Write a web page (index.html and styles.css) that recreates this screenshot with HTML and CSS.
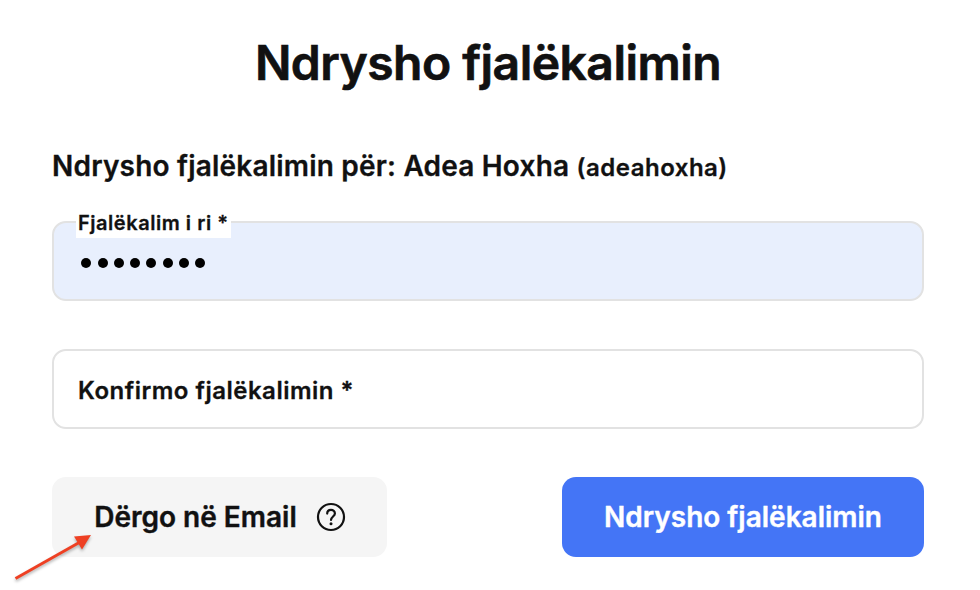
FILE: index.html
```html
<!DOCTYPE html>
<html lang="sq">
  <head>
    <meta charset="utf-8" />
    <meta name="viewport" content="width=device-width, initial-scale=1.0" />
    <title>Ndrysho fjalëkalimin</title>
    <link rel="stylesheet" href="styles.css">
  </head>
  <body>
    <form class="password-form">
      <h1 class="title">Ndrysho fjalëkalimin</h1>
      <h2 class="subtitle">Ndrysho fjalëkalimin për: Adea Hoxha <small>(adeahoxha)</small></h2>

      <div class="field field-filled">
        <span class="field-label">Fjalëkalim i ri *</span>
        <div class="dots">
          <i></i><i></i><i></i><i></i><i></i><i></i><i></i><i></i>
        </div>
      </div>

      <div class="field">
        <span class="field-placeholder">Konfirmo fjalëkalimin *</span>
      </div>

      <div class="actions">
        <button class="btn btn-light" type="button">
          <span>Dërgo në Email</span>
          <svg class="help-icon" width="30" height="30" viewBox="0 0 30 30" fill="none" stroke="#111" stroke-width="2.2" stroke-linecap="round" stroke-linejoin="round">
            <circle cx="15" cy="15" r="13" />
            <path d="M11.2 11.6C11.2 9.2 12.9 7.8 15 7.8s3.9 1.4 3.9 3.6c0 2.9-3.9 3.3-3.9 6.6" />
            <circle cx="15" cy="21.8" r="1.5" fill="#111" stroke="none" />
          </svg>
        </button>
        <button class="btn btn-primary" type="button">Ndrysho fjalëkalimin</button>
      </div>
    </form>

    <svg class="arrow" width="90" height="60" viewBox="0 0 90 60">
      <path d="M2.5 48.5L68 11.5" stroke="#ee4023" stroke-width="3" />
      <path d="M78 5L61 6.5L69 19.5Z" fill="#ee4023" />
    </svg>
  </body>
</html>
```
FILE: styles.css
```css
*{
  box-sizing: border-box;
}
body{
  margin: 0;
  background: #fff;
  color: #111;
  font-family: Inter, "Liberation Sans", sans-serif;
  -webkit-text-stroke: 0.3px;
}
.password-form{
  padding: 33px 56px 0 52px;
}
.title{
  margin: 0;
  font-size: 48px;
  line-height: 60px;
  font-weight: 600;
  letter-spacing: -0.52px;
  text-align: center;
  -webkit-text-stroke: 0.7px;
}
.subtitle{
  margin: 54px 0 34px;
  font-size: 28px;
  line-height: 38px;
  font-weight: 600;
  letter-spacing: 0.2px;
  white-space: nowrap;
}
.subtitle small{
  font-size: 24px;
  letter-spacing: 0.5px;
}
.field{
  position: relative;
  display: flex;
  align-items: center;
  height: 80px;
  margin-bottom: 48px;
  padding: 0 24px;
  border: 2px solid #e2e2e2;
  border-radius: 14px;
}
.field-filled{
  background: #e8effd;
}
/* label sits over the top border */
.field-label{
  position: absolute;
  top: -14px;
  left: 22px;
  padding: 0 2px;
  background: #fff;
  font-size: 20px;
  line-height: 29px;
  font-weight: 600;
  letter-spacing: 0.54px;
  white-space: nowrap;
}
.dots{
  display: flex;
  gap: 6.25px;
  padding: 4px 3.3px 0;
}
.dots i{
  width: 10px;
  height: 10px;
  border-radius: 50%;
  background: #000;
}
.field-placeholder{
  padding-top: 2px;
  font-size: 24px;
  font-weight: 600;
  letter-spacing: 0.5px;
}
.actions{
  display: flex;
  justify-content: space-between;
}
.btn{
  display: flex;
  align-items: center;
  justify-content: center;
  height: 80px;
  padding: 0;
  border: 0;
  border-radius: 14px;
  font-family: inherit;
  font-size: 28px;
  font-weight: 600;
  white-space: nowrap;
  -webkit-text-stroke: 0.4px;
}
.btn-light{
  width: 335px;
  padding-left: 1px;
  gap: 19px;
  background: #f5f5f5;
  color: #111;
}
.btn-primary{
  width: 362px;
  background: #4475f6;
  color: #fff;
}
.arrow{
  position: absolute;
  left: 13px;
  top: 530px;
  filter: drop-shadow(0 2px 1.5px rgba(0, 0, 0, 0.3));
}
```
